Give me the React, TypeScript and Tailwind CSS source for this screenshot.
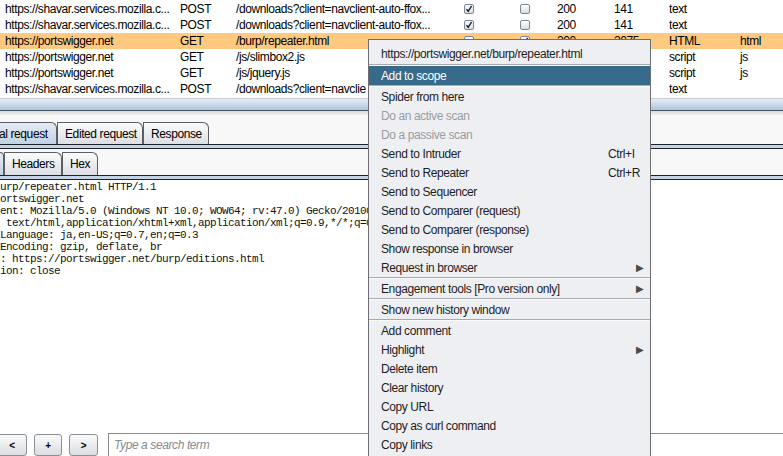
import React from 'react';

type Row = {
  host: string;
  method: string;
  url: string;
  edited?: boolean;
  params?: boolean;
  status: string;
  len: string;
  mime: string;
  ext: string;
  hl?: boolean;
};

// rows 4 and 5 are covered by the context menu from the url column on
const rows: Row[] = [
  { host: 'https://shavar.services.mozilla.c...', method: 'POST', url: '/downloads?client=navclient-auto-ffox...', edited: true, params: false, status: '200', len: '141', mime: 'text', ext: '' },
  { host: 'https://shavar.services.mozilla.c...', method: 'POST', url: '/downloads?client=navclient-auto-ffox...', edited: true, params: false, status: '200', len: '141', mime: 'text', ext: '' },
  { host: 'https://portswigger.net', method: 'GET', url: '/burp/repeater.html', edited: false, params: true, status: '200', len: '2075', mime: 'HTML', ext: 'html', hl: true },
  { host: 'https://portswigger.net', method: 'GET', url: '/js/slimbox2.js', status: '', len: '', mime: 'script', ext: 'js' },
  { host: 'https://portswigger.net', method: 'GET', url: '/js/jquery.js', status: '', len: '', mime: 'script', ext: 'js' },
  { host: 'https://shavar.services.mozilla.c...', method: 'POST', url: '/downloads?client=navclie', status: '', len: '', mime: 'text', ext: '' },
];

const requestLines = [
  'urp/repeater.html HTTP/1.1',
  'ortswigger.net',
  'ent: Mozilla/5.0 (Windows NT 10.0; WOW64; rv:47.0) Gecko/20100',
  ' text/html,application/xhtml+xml,application/xml;q=0.9,*/*;q=0',
  'Language: ja,en-US;q=0.7,en;q=0.3',
  'Encoding: gzip, deflate, br',
  ': https://portswigger.net/burp/editions.html',
  'ion: close',
];

type MenuItem =
  | { sep: true }
  | { label: string; shortcut?: string; sub?: boolean; disabled?: boolean; active?: boolean; sep?: false };

const menu: MenuItem[] = [
  { label: 'Add to scope', active: true },
  { sep: true },
  { label: 'Spider from here' },
  { label: 'Do an active scan', disabled: true },
  { label: 'Do a passive scan', disabled: true },
  { label: 'Send to Intruder', shortcut: 'Ctrl+I' },
  { label: 'Send to Repeater', shortcut: 'Ctrl+R' },
  { label: 'Send to Sequencer' },
  { label: 'Send to Comparer (request)' },
  { label: 'Send to Comparer (response)' },
  { label: 'Show response in browser' },
  { label: 'Request in browser', sub: true },
  { sep: true },
  { label: 'Engagement tools [Pro version only]', sub: true },
  { sep: true },
  { label: 'Show new history window' },
  { sep: true },
  { label: 'Add comment' },
  { label: 'Highlight', sub: true },
  { label: 'Delete item' },
  { label: 'Clear history' },
  { label: 'Copy URL' },
  { label: 'Copy as curl command' },
  { label: 'Copy links' },
];

function Check({ on }: { on?: boolean }) {
  if (on === undefined) return null;
  return (
    <span className="flex h-[10px] w-[10px] items-center justify-center rounded-[2px] border border-[#7a8896] bg-gradient-to-b from-[#fdfdfd] to-[#d8dde3]">
      {on && (
        <svg width="8" height="8" viewBox="0 0 8 8">
          <path d="M1.5 4.2 L3.2 6.3 L6.6 0.8" fill="none" stroke="#1b2530" strokeWidth="1.4" />
        </svg>
      )}
    </span>
  );
}

function Tab({ label, selected, className = '' }: { label: string; selected?: boolean; className?: string }) {
  return (
    <div
      className={`flex h-full shrink-0 items-center whitespace-nowrap rounded-tr-[6px] border border-b-0 border-[#5a5f66] ${
        selected ? 'bg-gradient-to-b from-[#e4ebf2] to-[#c3d3e3]' : 'bg-gradient-to-b from-[#fbfbfb] to-[#dcdfe3]'
      } ${className}`}
    >
      {label}
    </div>
  );
}

function Stripe() {
  return <div className="h-[5px] border-y border-[#1d2329] bg-[#c4d4e4]" />;
}

function ContextMenu() {
  return (
    <div className="absolute left-[368px] top-[39px] w-[283px] border border-[#6e6e74] bg-[#eeeff3] pb-[4px] text-[12px] text-[#1e1e1e]">
      <div className="flex h-[24px] items-center whitespace-nowrap pl-[12px] pt-[4px]">
        https://portswigger.net/burp/repeater.html
      </div>
      <div className="border-t border-b border-t-[#a9aab0] border-b-[#fafafa]" />
      {menu.map((m, i) =>
        m.sep ? (
          <div key={i} className="border-t border-b border-t-[#a9aab0] border-b-[#fafafa]" />
        ) : (
          <div
            key={i}
            className={`flex h-[19px] items-center whitespace-nowrap pl-[12px] ${m.active ? 'bg-[#386a8b] text-white' : ''} ${
              m.disabled ? 'text-[#9b9ba0]' : ''
            }`}
          >
            <span className="w-[227px]">{m.label}</span>
            {m.shortcut && <span>{m.shortcut}</span>}
            {m.sub && <span className="ml-[28px] text-[10px] tracking-normal text-[#4a4a4a]">▶</span>}
          </div>
        )
      )}
    </div>
  );
}

export default function App() {
  return (
    <div className="relative h-[456px] w-[783px] overflow-hidden bg-white font-['Liberation_Sans',Arial,sans-serif] text-[12px] tracking-[-0.4px] text-black">
      {/* proxy history table */}
      <div className="h-[97px] pt-[1px]">
        {rows.map((r, i) => (
          <div key={i} className={`flex h-[16px] items-center whitespace-nowrap pl-[5px] ${r.hl ? 'bg-[#ffc980]' : ''}`}>
            <span className="w-[175px]">{r.host}</span>
            <span className="w-[56px]">{r.method}</span>
            <span className="w-[228px]">{r.url}</span>
            <span className="w-[56px]">
              <Check on={r.edited} />
            </span>
            <span className="w-[37px]">
              <Check on={r.params} />
            </span>
            <span className="w-[57px]">{r.status}</span>
            <span className="w-[55px]">{r.len}</span>
            <span className="w-[71px]">{r.mime}</span>
            <span>{r.ext}</span>
          </div>
        ))}
      </div>

      {/* split pane divider */}
      <div className="h-[2px] border-b border-[#c6c9cd] bg-white" />
      <div className="h-[12px] border-b border-[#45525f] bg-gradient-to-b from-[#e6edf4] to-[#afc5da]" />
      <div className="h-[4px] bg-gradient-to-b from-[#d9dadc] to-[#eeeeee]" />

      {/* message tabs */}
      <div className="bg-[#f8f8f8] pt-[7px]">
        <div className="flex h-[22px]">
          <Tab label="al request" selected className="-ml-[1px] w-[58px] border-l-0" />
          <Tab label="Edited request" className="w-[86px] pl-[7px]" />
          <Tab label="Response" className="w-[66px] pl-[7px]" />
        </div>
        <Stripe />
        <div className="flex h-[26px] pt-[3px]">
          <Tab label="" selected className="w-[4px] border-l-0" />
          <Tab label="Headers" className="w-[58px] pl-[7px]" />
          <Tab label="Hex" className="w-[36px] pl-[7px]" />
        </div>
        <Stripe />
      </div>

      {/* raw request */}
      <div className="h-[253px] pt-[1px] font-['Liberation_Mono',monospace] text-[11px] leading-[12px] tracking-[-0.6px] text-[#111]">
        {requestLines.map((l, i) => (
          <div key={i} className="whitespace-pre">
            {l}
          </div>
        ))}
      </div>

      {/* search bar */}
      <div className="flex h-[23px] items-end gap-[7px]">
        <button className="-ml-[3px] h-[22px] w-[30px] rounded-[3px] border border-[#8c8f94] bg-gradient-to-b from-[#fbfbfb] to-[#dadde1] text-[10px] font-bold">
          &lt;
        </button>
        <button className="h-[22px] w-[28px] rounded-[3px] border border-[#8c8f94] bg-gradient-to-b from-[#fbfbfb] to-[#dadde1] text-[10px] font-bold">
          +
        </button>
        <button className="h-[22px] w-[29px] rounded-[3px] border border-[#8c8f94] bg-gradient-to-b from-[#fbfbfb] to-[#dadde1] text-[10px] font-bold">
          &gt;
        </button>
        <div className="ml-[3px] flex h-[23px] flex-1 items-center border-l border-t border-[#8a8a8a] pl-[5px] italic text-[#8a8a8a]">
          Type a search term
        </div>
      </div>

      <ContextMenu />
    </div>
  );
}
